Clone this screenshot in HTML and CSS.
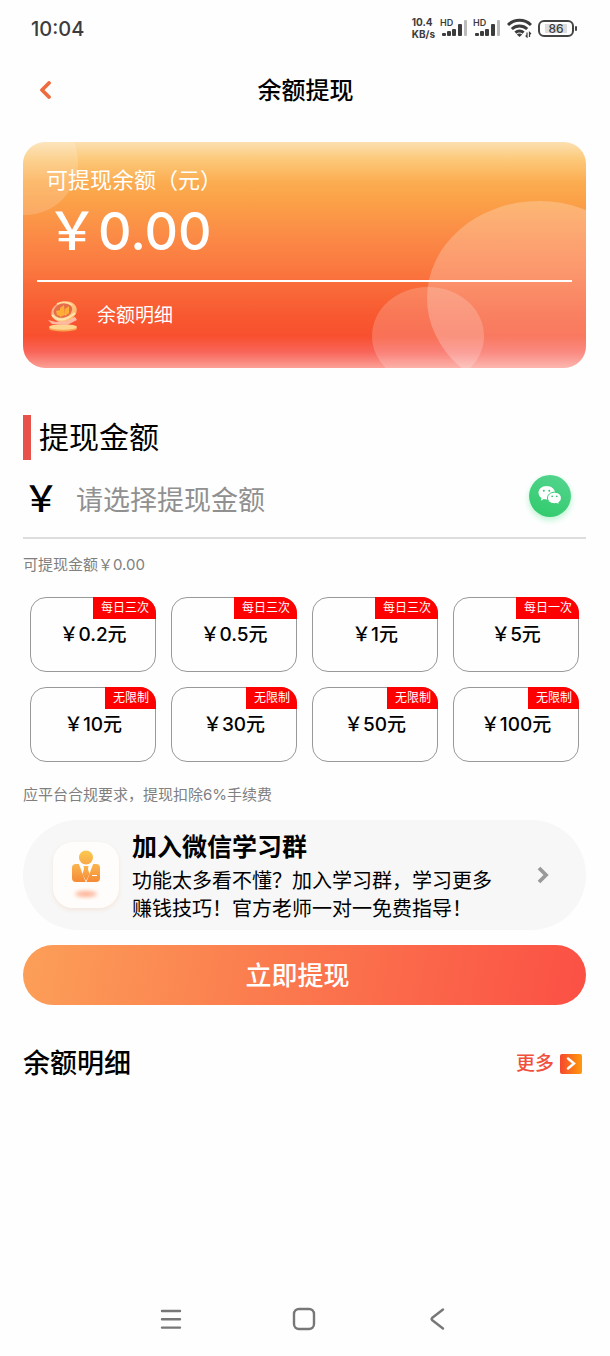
FILE: index.html
```html
<!DOCTYPE html>
<html lang="zh-CN">
<head>
<meta charset="utf-8">
<meta name="viewport" content="width=device-width, initial-scale=1">
<title>余额提现</title>
<link rel="stylesheet" href="styles.css">
</head>
<body>
<div class="screen">
  <div class="status">
    <time class="clock">10:04</time>
    <div class="indicators">
      <div class="speed"><span>10.4</span><span>KB/s</span></div>
      <div class="signal">
        <span class="hd">HD</span>
        <svg width="27" height="18" viewBox="0 0 27 18" fill="#3c3c3c"><rect x="1" y="14" width="4" height="3" rx="1"/><rect x="6" y="12" width="4" height="5" rx="1"/><rect x="11" y="10" width="4" height="7" rx="1"/><rect x="17" y="5" width="4" height="12" rx="1"/><rect x="23" y="1" width="3" height="16" rx="1" fill="#bbb"/></svg>
      </div>
      <div class="signal">
        <span class="hd">HD</span>
        <svg width="27" height="18" viewBox="0 0 27 18" fill="#3c3c3c"><rect x="1" y="14" width="4" height="3" rx="1"/><rect x="6" y="12" width="4" height="5" rx="1"/><rect x="11" y="10" width="4" height="7" rx="1"/><rect x="17" y="5" width="4" height="12" rx="1"/><rect x="23" y="1" width="3" height="16" rx="1" fill="#bbb"/></svg>
      </div>
      <svg class="wifi" width="25" height="20" viewBox="0 0 25 20" fill="none" stroke="#3c3c3c" stroke-width="3"><path d="M1 7C7.500.8 17.500.8 24 7"/><path d="M4.800 11C9 7 16 7 20.200 11"/><path d="M8.400 14.700C10.800 12.500 14.200 12.500 16.600 14.700"/><path d="M9.800 16.500L12.500 19L15.200 16.500Q12.500 14.500 9.800 16.500Z" fill="#3c3c3c" stroke="none"/><path d="M20 14.500V19L18.600 17.600M22.500 19V14.500L24 16" stroke-width="1.200"/></svg>
      <div class="battery"><span>86</span></div>
    </div>
  </div>

  <header class="header">
    <button class="back" aria-label="返回"><svg width="14" height="20" viewBox="0 0 14 20" fill="none" stroke="#ee6b3f" stroke-width="3.800" stroke-linecap="round" stroke-linejoin="round"><path d="M10 2L3 9L10 16"/></svg></button>
    <h1>余额提现</h1>
  </header>

  <main>
    <section class="balance">
      <svg class="bubbles" viewBox="0 0 563 226" preserveAspectRatio="none" fill="#fff"><circle cx="2" cy="20" r="53" opacity=".17"/><ellipse cx="516" cy="156" rx="112" ry="97" opacity=".24"/><ellipse cx="405" cy="194" rx="56" ry="49" opacity=".19"/></svg>
      <div class="balance-label">可提现余额&#xFF08;元&#xFF09;</div>
      <div class="balance-value">&#xFFE5;0.00</div>
      <a class="balance-link" href="#details">
        <svg width="32" height="32" viewBox="0 0 32 32"><defs><linearGradient id="coin" x1="0" y1="0" x2="1" y2="1"><stop offset="0" stop-color="#ff9f80"/><stop offset=".5" stop-color="#ffc98a"/><stop offset="1" stop-color="#ffb060"/></linearGradient></defs><ellipse cx="16" cy="28.500" rx="14" ry="3" fill="#f8a452"/><ellipse cx="16" cy="27" rx="14" ry="2.800" fill="#ffd58f"/><path d="M1 20L9 22L28 17L30 20L20 25L5 24Z" fill="#ffb9a2"/><ellipse cx="17" cy="11.500" rx="13" ry="10" transform="rotate(-18 17 11.500)" fill="url(#coin)"/><ellipse cx="16" cy="10.500" rx="9.500" ry="7" transform="rotate(-18 16 10.500)" fill="#e56d4c"/><path d="M9 11L13 10V16L10 15ZM13 8L17 5L18 15L13 17ZM18 9L22 6V13L18 16Z" fill="#ffad35"/><path d="M5 15Q14 25 28 13" fill="none" stroke="#ffe5ab" stroke-width="2"/><path d="M10 4Q17 0 25 5" fill="none" stroke="#ffe0a0" stroke-width="1.500"/></svg>
        <span>余额明细</span>
      </a>
    </section>

    <h2 class="amount-title"><label for="amount">提现金额</label></h2>
    <div class="amount-row">
      <span class="yen">&#xFFE5;</span>
      <input id="amount" type="text" placeholder="请选择提现金额">
      <button class="wechat" aria-label="微信"><svg width="24" height="20" viewBox="0 0 24 20"><path d="M8.500 0C3.800 0 .5 3 .5 6.800c0 2.200 1.200 4.100 3 5.300l-.7 2.600 3-1.600c.9.200 1.700.3 2.700.3 4.700 0 8.500-2.700 8.500-6.600S13.200 0 8.500 0Z" fill="#fff"/><path d="M16.500 6.200c-4 0-7 2.500-7 5.800s3 5.700 7 5.700c.8 0 1.500-.1 2.200-.3l2.600 1.500-.6-2.300c1.700-1.100 2.700-2.800 2.700-4.600 0-3.300-2.900-5.800-6.900-5.800Z" fill="#fff" stroke="#38cb74"/><g fill="#39c774"><circle cx="5.800" cy="4.800" r="1"/><circle cx="11.300" cy="4.800" r="1"/><circle cx="14.200" cy="10.300" r=".9"/><circle cx="18.800" cy="10.300" r=".9"/></g></svg></button>
    </div>
    <p class="note available">可提现金额&#xFFE5;0.00</p>

    <div class="options">
      <button class="option">&#xFFE5;0.2元<span class="badge">每日三次</span></button>
      <button class="option">&#xFFE5;0.5元<span class="badge">每日三次</span></button>
      <button class="option">&#xFFE5;1元<span class="badge">每日三次</span></button>
      <button class="option">&#xFFE5;5元<span class="badge">每日一次</span></button>
      <button class="option">&#xFFE5;10元<span class="badge">无限制</span></button>
      <button class="option">&#xFFE5;30元<span class="badge">无限制</span></button>
      <button class="option">&#xFFE5;50元<span class="badge">无限制</span></button>
      <button class="option">&#xFFE5;100元<span class="badge">无限制</span></button>
    </div>
    <p class="note fee">应平台合规要求&#xFF0C;提现扣除6%手续费</p>

    <a class="join" href="#group">
      <span class="join-icon"><svg width="40" height="50" viewBox="0 0 40 50"><defs><linearGradient id="person" x1="0" y1="0" x2="0" y2="1"><stop offset="0" stop-color="#fbb650"/><stop offset="1" stop-color="#f58a35"/></linearGradient><linearGradient id="head" x1="0" y1="0" x2="0" y2="1"><stop offset="0" stop-color="#fbc950"/><stop offset="1" stop-color="#f9a947"/></linearGradient><filter id="soft" x="-50%" y="-80%" width="200%" height="260%"><feGaussianBlur stdDeviation="2"/></filter></defs><ellipse cx="20" cy="44" rx="11" ry="3" fill="#fb7d4e" opacity=".6" filter="url(#soft)"/><rect x="6" y="14" width="28" height="18" rx="4" fill="url(#person)"/><path d="M12.500 13L20 33L27.500 13Z" fill="#fff"/><path d="M17.500 16H22.500L22 19L23.500 24L20 31L16.500 24L18 19Z" fill="url(#person)"/><path d="M26 25.500H31" stroke="#fff"/><circle cx="20" cy="7.500" r="8" fill="#fffdfb"/><circle cx="20" cy="7.500" r="7" fill="url(#head)"/></svg></span>
      <span class="join-text">
        <strong>加入微信学习群</strong>
        <span>功能太多看不懂&#xFF1F;加入学习群&#xFF0C;学习更多<br>赚钱技巧&#xFF01;官方老师一对一免费指导&#xFF01;</span>
      </span>
      <svg class="join-arrow" width="14" height="18" viewBox="0 0 14 18" fill="none" stroke="#999" stroke-width="3.800"><path d="M3 2L10 9L3 16"/></svg>
    </a>

    <button class="submit">立即提现</button>

    <div class="details" id="details">
      <h2>余额明细</h2>
      <a href="#more">更多<svg width="22" height="20" viewBox="0 0 22 20"><defs><linearGradient id="more"><stop offset="0" stop-color="#f6472f"/><stop offset="1" stop-color="#ff9a0b"/></linearGradient></defs><rect width="22" height="20" rx="2" fill="url(#more)"/><path d="M8 4.500L14 9.500L8 14.500" fill="none" stroke="#fff" stroke-width="2.500" stroke-linecap="round"/></svg></a>
    </div>
  </main>

  <nav class="system-nav">
    <button aria-label="最近任务"><svg width="24" height="24" viewBox="0 0 24 24" fill="none" stroke="#777" stroke-width="2.400" stroke-linecap="round"><path d="M3 4H21M3 12.300H21M3 20.600H21"/></svg></button>
    <button aria-label="主页"><svg width="24" height="24" viewBox="0 0 24 24" fill="none" stroke="#777" stroke-width="2.400"><rect x="2" y="2" width="20" height="20" rx="5"/></svg></button>
    <button aria-label="返回上级"><svg width="24" height="24" viewBox="0 0 24 24" fill="none" stroke="#777" stroke-width="2.400" stroke-linecap="round" stroke-linejoin="round"><path d="M18 2.500L7 11Q6 12 7 13L18 21.500"/></svg></button>
  </nav>
</div>
</body>
</html>
```
FILE: styles.css
```css
* { box-sizing: border-box; }
body {
  margin: 0;
  background: #fefefe;
  color: #000;
  font-family: Inter, "Noto Sans CJK SC", sans-serif;
}
h1, h2, p { margin: 0; font-weight: 400; }
button { margin: 0; padding: 0; border: 0; background: none; color: inherit; font: inherit; cursor: pointer; }
a { color: inherit; text-decoration: none; }
svg { display: block; flex: none; }

.screen { min-height: 100vh; display: flex; flex-direction: column; }

.status { height: 56px; padding: 0 33px 0 31px; display: flex; align-items: center; justify-content: space-between; color: #3c3c3c; }
.clock { font-size: 20px; line-height: 28px; font-weight: 500; padding-top: 2px; }
.indicators { display: flex; align-items: center; gap: 6px; }
.speed { display: flex; flex-direction: column; font-size: 10px; line-height: 12px; font-weight: 700; }
.signal { position: relative; }
.hd { position: absolute; left: -1px; top: -1px; font-size: 9px; line-height: 9px; font-weight: 600; }
.battery { position: relative; width: 36px; height: 17px; margin-right: 3px; padding: 2px 5px; border: 2px solid #444; border-radius: 6px; }
.battery::after { content: ""; position: absolute; right: -5px; top: 4px; width: 2px; height: 5px; background: #444; border-radius: 1px; }
.battery span { display: block; background: #ddd; font-size: 12px; line-height: 9px; text-align: center; font-weight: 500; }

.header { height: 68px; padding: 2px 38px 0 39px; display: grid; grid-template-columns: 14px 1fr 14px; align-items: center; }
.header h1 { font-size: 24px; line-height: 36px; text-align: center; font-weight: 500; }

main { padding: 18px 24px 0 23px; }

.balance {
  position: relative;
  overflow: hidden;
  padding: 22px 14px 36px;
  border-radius: 22px;
  color: #fff;
  background: linear-gradient(#fce0b0 0%, #fcc878 8%, #fcac50 18%, #fba148 26%, #fb8a46 42%, #fb7840 56%, #f96838 66%, #f85830 77%, #f8502f 86%, #f9655a 93%, #fba096 100%);
}
.bubbles { position: absolute; inset: 0; width: 100%; height: 100%; }
.balance-label { position: relative; padding-left: 9px; font-size: 22px; line-height: 32px; }
.balance-value { position: relative; padding: 2px 9px 14px; font-size: 52px; line-height: 68px; font-weight: 500; border-bottom: 2px solid #fff; }
.balance-link { position: relative; margin: 18px 10px 0; display: flex; align-items: center; gap: 18px; font-size: 19px; line-height: 32px; }

.amount-title { margin-top: 47px; padding-left: 8px; border-left: 8px solid #e9524a; font-size: 30px; line-height: 45px; }
.amount-row { height: 79px; display: flex; align-items: center; border-bottom: 2px solid #ddd; }
.yen { width: 38px; font-size: 36px; line-height: 48px; font-weight: 500; }
.amount-row input { flex: 1; min-width: 0; padding: 5px 0 0 15px; border: 0; outline: 0; background: none; font: inherit; font-size: 27px; line-height: 40px; }
.amount-row input::placeholder { color: #909090; opacity: 1; }
.wechat { width: 42px; height: 42px; margin: 0 15px 6px 0; display: grid; place-items: center; border-radius: 50%; background: linear-gradient(20deg, #2fca6a, #55d590); box-shadow: 0 3px 6px #b9f3d0; }

.note { color: #808080; font-size: 15px; line-height: 22px; }
.available { margin-top: 15px; }
.options { margin: 21px 7px 0; display: grid; grid-template-columns: repeat(4, 1fr); gap: 15px; }
.option { position: relative; height: 75px; border: 1px solid #999; border-radius: 16px; font-size: 19px; line-height: 30px; font-weight: 500; }
.badge { position: absolute; top: -1px; right: -1px; padding: 0 7px 0 8px; border-top-right-radius: 16px; background: #f00; color: #fff; font-size: 12px; line-height: 22px; font-weight: 400; }
.fee { margin-top: 22px; }

.join { margin-top: 14px; padding: 7px 36px 7px 30px; display: flex; align-items: center; border-radius: 55px; background: #f7f7f7; }
.join-icon { width: 66px; height: 66px; margin-right: 13px; flex: none; display: grid; place-items: center; border-radius: 20px; background: #fffdfb; box-shadow: 0 2px 4px #f3e6dc; }
.join-text { flex: 1; padding-top: 5px; display: flex; flex-direction: column; gap: 5px; font-size: 20px; line-height: 28px; }
.join-text strong { font-size: 25px; line-height: 30px; font-weight: 700; }

.submit { display: block; width: 100%; height: 60px; margin-top: 15px; padding: 0 14px 4px 0; border-radius: 30px; background: linear-gradient(100deg, #fc9f58, #fb7a4e 45%, #fb5045); color: #fff; font-size: 26px; font-weight: 500; }

.details { margin-top: 39px; padding-right: 4px; display: flex; align-items: center; justify-content: space-between; }
.details h2 { font-size: 27px; line-height: 40px; font-weight: 500; }
.details a { display: flex; align-items: center; gap: 6px; color: #f0503c; font-size: 19px; line-height: 28px; font-weight: 500; }

.system-nav { margin-top: auto; height: 74px; padding-right: 2px; display: flex; align-items: center; justify-content: center; gap: 109px; }
```
